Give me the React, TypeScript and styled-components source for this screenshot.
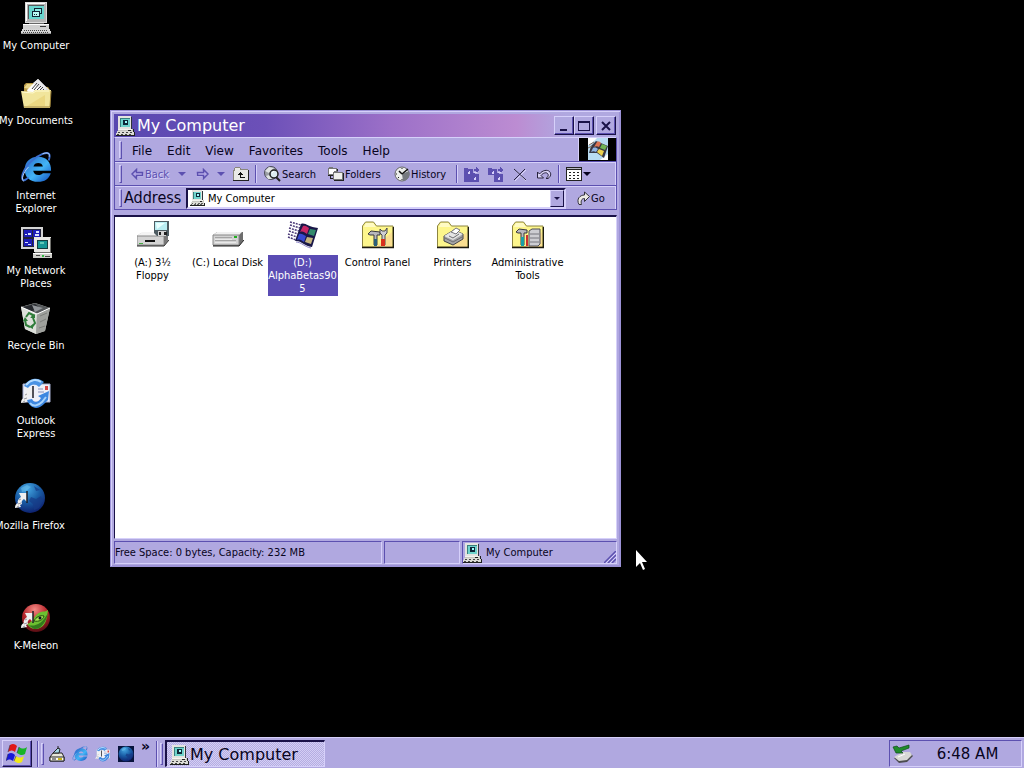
import React from "react";
import styled, { createGlobalStyle } from "styled-components";

const c = {
  face: "#b0a8e0",
  light: "#d6d0fa",
  mid: "#9c92d6",
  shadow: "#5c50b0",
  dark: "#1a1248",
  text: "#080420",
};
const ui = `"DejaVu Sans Condensed", "DejaVu Sans", sans-serif`;
const wide = `"DejaVu Sans", sans-serif`;

const GlobalStyle = createGlobalStyle`
  *, *::before, *::after { box-sizing: border-box; }
  body { margin: 0; background: #000; font: 11px/13px ${ui}; color: ${c.text}; }
  button, input { font: inherit; color: inherit; }
  button { border: 0; padding: 0; margin: 0; background: none; }
  svg { display: block; flex: none; }
`;

/* ---------- icons ---------- */

type IconProps = { size?: number };

const Svg = styled.svg<{ $w: number; $h?: number }>`
  width: ${(p) => p.$w}px;
  height: ${(p) => p.$h ?? p.$w}px;
`;

const Shortcut = () => (
  <g>
    <path d="M5 11h8v9l-3-3c-2 1-3 3-2 5l-2 1 1 2-6 1c0-3 1-4 3-5-1-1 0-4 3-6z" fill="#f0f0f0" />
    <path d="M13 9v12" stroke="#1c1c24" strokeWidth="1.500" />
    <path d="M4 22l3-1M5 18l2-1M3 25l2-1" stroke="#9a9aa0" />
  </g>
);

const ComputerLarge = () => (
  <Svg viewBox="0 0 32 32" $w={32} shapeRendering="crispEdges" aria-hidden>
    <path d="M5 0h22v21H5z" fill="#dcdcdc" />
    <path d="M6 1h20v19H6z" fill="#b4b4b4" />
    <path d="M6 1h19v1H7v17H6z" fill="#fff" />
    <path d="M8 3h16v14H8z" fill="#55585a" />
    <path d="M9 4h15v13H9z" fill="#69d6cf" />
    <path d="M14 6h8v6h-8z" fill="#123" />
    <path d="M15 7h6v4h-6z" fill="#8ceae4" />
    <path d="M12 9h8v6h-8z" fill="#123" />
    <path d="M13 10h6v4h-6z" fill="#bafaf4" />
    <path d="M14 12h1v1h-1zM16 12h1v1h-1z" fill="#123" />
    <path d="M9 21h15v2H9z" fill="#686868" />
    <path d="M3 22h26v5H3z" fill="#d0d0d0" />
    <path d="M3 22h26v1H3z" fill="#fff" />
    <path d="M20 24h6v1h-6z" fill="#333" />
    <path d="M2 27h28l1 4H1z" fill="#d6d6d6" />
    <path d="M4 28.500h24" stroke="#444" strokeDasharray="1 1" />
    <path d="M3 30.500h26" stroke="#444" strokeDasharray="1 1" />
    <path d="M1 31h30v1H1z" fill="#999" />
  </Svg>
);

const ComputerSmall = ({ size = 20 }: IconProps) => (
  <Svg viewBox="0 0 20 20" $w={size} shapeRendering="crispEdges" aria-hidden>
    <path d="M2 0h13v13H2z" fill="#e4e4e0" />
    <path d="M15 1h1v13H4v-1h11z" fill="#30343a" />
    <path d="M4 2h10v9H4z" fill="#39807f" />
    <path d="M5 3h9v8H5z" fill="#6fd3cc" />
    <path d="M7 4h5v5H7z" fill="#0e2838" />
    <path d="M9 5h2v2H9z" fill="#9ff" />
    <path d="M2 13h15v3H2z" fill="#c6c6c0" />
    <path d="M2 13h14v1H2z" fill="#f4f4f0" />
    <path d="M12 14h3v1h-3z" fill="#222" />
    <path d="M1 15h17v4H0v-2h1z" fill="#dcdcd6" />
    <path d="M2 16.500h15M1 18.500h16" stroke="#444" strokeDasharray="2 2" />
    <path d="M17 13h1v3h1v4H0v-1h18v-3h-1z" fill="#202020" />
  </Svg>
);

const Documents = () => (
  <Svg viewBox="0 0 32 32" $w={32} aria-hidden>
    <path d="M4 12V8l2-2h8l2 3 12 1 2 3v16H4z" fill="#b99a48" />
    <path d="M4 11l3-4h7l3 6z" fill="#ead78c" />
    <path d="M7 13L18 2l13 13-7 6H9z" fill="#fdfdfd" />
    <path d="M18 2l13 13-4 3L13 6z" fill="#e7e7ea" />
    <path d="M12 12l5-6M14 13l5-6M16 14l5-5M19 14l4-4M22 14l2-2" stroke="#3d3d44" />
    <path d="M26 11l5 5-3 3z" fill="#ccc" />
    <path d="M1 14l12 1 2-2h16l-1 18H4z" fill="#f1e59c" />
    <path d="M2 15l11 1 3-2h13" stroke="#fffbd0" fill="none" />
    <path d="M4 30h26l1-16" stroke="#9a7f34" fill="none" />
    <path d="M7 29l18-11v11z" fill="#e8cf72" opacity=".6" />
  </Svg>
);

const IE = ({ size = 34 }: IconProps) => (
  <Svg viewBox="0 0 34 34" $w={size} aria-hidden>
    <defs>
      <linearGradient id="ieg" x1="0" y1="0" x2="1" y2="1">
        <stop offset="0" stopColor="#2869c8" />
        <stop offset=".55" stopColor="#43b4f5" />
        <stop offset="1" stopColor="#114cbf" />
      </linearGradient>
    </defs>
    <path d="M33 20H14c.6 3 2.600 4.500 5.500 4.500 2.200 0 3.800-.8 4.800-2h8.400c-2 6-6.500 9.200-13.500 9.200C10.500 31.700 5 26.500 5 19 5 10 11 5 19.500 5 27.500 5 33.500 10.500 33 20zM14.300 15.500h10c-.5-2.500-2.500-3.700-4.900-3.700-2.600 0-4.500 1.200-5.100 3.700z" fill="url(#ieg)" />
    <path d="M9 27C3 33 1 29 3 23 6 14 16 5 24 2c7-2.500 9 0 6.500 7" stroke="#3b6fd0" strokeWidth="2" fill="none" />
    <path d="M4 31c-3-1-1-9 5-15M24 2c5-2 8-1 7 3" stroke="#bcd4f7" fill="none" />
  </Svg>
);

const Network = () => (
  <Svg viewBox="0 0 32 32" $w={32} shapeRendering="crispEdges" aria-hidden>
    <path d="M1 0h22v22H1z" fill="#d4d4d4" />
    <path d="M3 2h18v18H3z" fill="#22233a" />
    <path d="M4 3h8v7H4zM13 3h7v7h-7zM4 12h8v7H4zM13 12h7v7h-7z" fill="#1c1cb8" />
    <path d="M5 7h2v1H5zM8 6h3v2H8zM15 7h4v2h-4zM16 4h3v2h-3zM5 15h3v1H5zM8 17h3v1H8z" fill="#d7e0ff" />
    <path d="M14 10h17v15H14z" fill="#e8e8e4" />
    <path d="M30 11h1v15H15v-1h15z" fill="#70706c" />
    <path d="M17 13h11v9H17z" fill="#143c40" />
    <path d="M18 14h9v7h-9z" fill="#159595" />
    <path d="M20 15h4v2h-4z" fill="#60c8b8" />
    <path d="M13 26h19v5H13z" fill="#cfcfca" />
    <path d="M13 26h19v1H13z" fill="#fff" />
    <path d="M16 28h4v1h-4zM25 29h5v1h-5z" fill="#444" />
    <path d="M22 28h2v2h-2z" fill="#3b4" />
  </Svg>
);

const Recycle = () => (
  <Svg viewBox="0 0 32 32" $w={32} aria-hidden>
    <path d="M1 5L15 1l15 5-5 23-9 3L5 27z" fill="#c2c5c0" />
    <path d="M1 5L15 1l15 5-13 6z" fill="#55585a" />
    <path d="M3 5l12-3 5 4-8 3z" fill="#26282d" />
    <path d="M12 3l11 3-8 4z" fill="#92969a" />
    <path d="M1 5l16 7-1 20L5 27z" fill="#dde0da" />
    <path d="M17 12L30 6l-5 23-9 3z" fill="#9fa19d" />
    <path d="M1 5l16 7 13-6" stroke="#fff" fill="none" />
    <path d="M20 14l7-3M20 20l6-3M19 26l6-2" stroke="#7e807c" />
    <path d="M6 15l3-4 4 2-1 2M13 16l2 5-3 4M10 25l-4-2-1-5" stroke="#2f7d3a" strokeWidth="2" fill="none" />
    <path d="M10 16h5v-4zM13 22v5l-4-2zM3 19l2-4 3 4z" fill="#2f7d3a" />
  </Svg>
);

const Outlook = ({ size = 32 }: IconProps) => (
  <Svg viewBox="0 0 32 32" $w={size} aria-hidden>
    <path d="M3 7h27v18H3z" fill="#eef0f8" stroke="#a6aed0" />
    <path d="M25 9h3v4h-3z" fill="#d84848" />
    <path d="M18 12h5M18 15h6" stroke="#8890b8" />
    <path d="M4 9c5-9 15-9 20-4l-5 5c-4-4-8-3-11 1z" fill="#4a93e4" />
    <path d="M6 8c5-6 11-6 15-3" stroke="#b4dcff" strokeWidth="2" fill="none" />
    <path d="M7 23c3 8 10 11 17 4l4-4 1-9-11 5 3 2c-3 5-7 5-9 1z" fill="#3d87e0" />
    <path d="M10 26c3 4 8 3 12-1l4-5" stroke="#a6d2fb" strokeWidth="2" fill="none" />
    <Shortcut />
  </Svg>
);

const Globe = ({ size = 32, flat }: IconProps & { flat?: boolean }) => (
  <Svg viewBox="0 0 32 32" $w={size} aria-hidden>
    <defs>
      <radialGradient id="globe" cx=".4" cy=".2" r=".85">
        <stop offset="0" stopColor="#46a8e4" />
        <stop offset=".5" stopColor="#1a5ea6" />
        <stop offset="1" stopColor="#0c1a68" />
      </radialGradient>
    </defs>
    {flat && <path d="M0 0h32v32H0z" fill="#08143c" />}
    <circle cx="16" cy="16" r="15" fill="url(#globe)" />
    <path d="M17 15l5 2 5-3 2 5-4 7-5 2-1-6-4-3zM20 4l6 4-4 1z" fill="#173a86" opacity=".7" />
    <path d="M7 6l6-3 4 2-5 4-4 1z" fill="#74c4ee" opacity=".5" />
    {!flat && <Shortcut />}
  </Svg>
);

const KMeleon = () => (
  <Svg viewBox="0 0 32 32" $w={32} aria-hidden>
    <defs>
      <radialGradient id="km" cx=".45" cy=".2" r=".85">
        <stop offset="0" stopColor="#f28a84" />
        <stop offset=".5" stopColor="#b8262c" />
        <stop offset="1" stopColor="#4a0a10" />
      </radialGradient>
    </defs>
    <circle cx="16" cy="16" r="14" fill="url(#km)" />
    <path d="M7 22c6-1 7-10 14-12 3-1 4 0 7-2-1 8-2 18-12 19-4 0-7-2-9-5z" fill="#6cc030" />
    <path d="M8 23c7 2 14-1 20-12-2 10-8 17-14 16z" fill="#347a1c" />
    <path d="M14 19c2-4 6-6 10-5-1 4-5 6-10 5z" fill="#a5e455" stroke="#24500f" />
    <circle cx="20" cy="16" r="1.500" fill="#112" />
    <Shortcut />
  </Svg>
);

const Floppy = () => (
  <Svg viewBox="0 0 32 32" $w={32} aria-hidden>
    <path d="M0 15l4-3h27v8l-4 5H0z" fill="#8f8f8f" />
    <path d="M1 14l4-3h26l-4 4H1z" fill="#f4f4f4" />
    <path d="M0 15h27v9H0z" fill="#d4d4d4" stroke="#888" />
    <path d="M27 15l4-4v8l-4 5z" fill="#777" />
    <path d="M0 25h27l5-6" stroke="#333" fill="none" />
    <path d="M8 19h10v2H8z" fill="#111" />
    <path d="M2 22h4v1H2z" fill="#4a4" />
    <path d="M17 0h15v15H20l-3-3z" fill="#4e5c62" />
    <path d="M18 1h12v8H18z" fill="#b9edf2" />
    <path d="M19 2h9l-8 6z" fill="#e8ffff" />
    <path d="M21 10h8v5h-8z" fill="#d4d4d4" />
    <path d="M22 11h2v3h-2zM27 11h3v3h-3z" fill="#222" />
  </Svg>
);

const Disk = () => (
  <Svg viewBox="0 0 32 32" $w={32} aria-hidden>
    <path d="M1 14l4-3h26v9l-4 5H1z" fill="#6d6d6d" />
    <path d="M1 14l4-3h25l-3 3z" fill="#f0f0f0" />
    <path d="M1 14h26v10H1z" fill="#d2d2d2" stroke="#888" />
    <path d="M3 17h17M3 20h21" stroke="#777" />
    <path d="M3 18h17M3 21h21" stroke="#fff" />
    <path d="M1 25h26l5-6" stroke="#222" fill="none" />
    <path d="M22 15h3v2h-3z" fill="#22b020" />
  </Svg>
);

const WinFlag = () => (
  <Svg viewBox="0 0 32 32" $w={32} aria-hidden>
    <path d="M14 3c4-2 7 3 17 4l-6 19c-8-1-11-7-17-6z" fill="#191748" />
    <path d="M16 5c3-1 4 1 6 2l-2 6c-3-2-4-3-7-2z" fill="#c72766" />
    <path d="M23 8l6 1-2 6-6-2z" fill="#328a6c" />
    <path d="M12 13c3-1 4 1 7 2l-2 6c-3-2-4-3-7-2z" fill="#3849d2" />
    <path d="M20 16l6 1-2 6-6-2z" fill="#c4b480" />
    <path d="M3 1l11 3M3 4l10 3M2 7l10 3M2 10l9 3M1 13l9 3M1 16l8 3" stroke="#4b3a78" strokeWidth="1.500" strokeDasharray="2 1" />
    <path d="M9 21c5 0 9 5 15 6" stroke="#8d85c8" fill="none" />
  </Svg>
);

const FolderShape = () => (
  <>
    <path d="M0.500 26V5l3-4h8l3 4H31v21z" fill="#fdf68c" stroke="#8c8440" />
    <path d="M2 6l2-4h7l3 4z" fill="#fffbc4" />
    <path d="M14 26L30 11v15z" fill="#f8cf94" opacity=".6" />
    <path d="M0 26.500h31.500V6" stroke="#1c1a10" strokeWidth="1.500" fill="none" />
  </>
);

const ControlPanel = () => (
  <Svg viewBox="0 0 32 32" $w={32} aria-hidden>
    <FolderShape />
    <path d="M6 13l3-3 9 1v3h-3v10h-3V14H8z" fill="#b8b8bc" stroke="#38383e" />
    <path d="M12 18h3v7h-3z" fill="#2a6078" />
    <path d="M18 8v4l2 2v10h3V14l2-2V7l-2 3h-3z" fill="#cfd0d3" stroke="#484850" />
    <path d="M19 18h4v7h-4z" fill="#d8301c" />
  </Svg>
);

const Printers = () => (
  <Svg viewBox="0 0 32 32" $w={32} aria-hidden>
    <FolderShape />
    <path d="M7 15l10-6 9 4v5l-10 6-9-4z" fill="#a5a5a8" stroke="#47474a" />
    <path d="M7 15l10-6 9 4-10 6z" fill="#e4e4e4" />
    <path d="M14 11l5-4 4 2-4 4z" fill="#fff" stroke="#77777c" />
    <path d="M8 17l8 4 9-5M12 15l4 2 6-4" stroke="#6d6d70" fill="none" />
  </Svg>
);

const AdminTools = () => (
  <Svg viewBox="0 0 32 32" $w={32} aria-hidden>
    <FolderShape />
    <path d="M17 10l3-2h8v15l-2 2h-9z" fill="#cdcdd2" stroke="#4f4f58" />
    <path d="M18 13h9M18 17h9M18 21h9" stroke="#77777f" />
    <path d="M4 11l3-3 8 1v3h-3v12H9V12H6z" fill="#b9b9bd" stroke="#38383e" />
    <path d="M9 16h3v9H9z" fill="#18a0a8" />
    <path d="M14 14h2v11h-2z" fill="#cf3030" />
  </Svg>
);

const Arrow = ({ flip }: { flip?: boolean }) => (
  <Svg viewBox="0 0 13 12" $w={13} $h={12} aria-hidden>
    <g transform={flip ? "matrix(-1 0 0 1 13 0)" : undefined}>
      <path d="M2 7L6 3v2.500h6v3H6V11z" fill="none" stroke={c.light} />
      <path d="M1 6L5.500 1.500v3h6v3h-6v3z" fill="#b4aae6" stroke={c.shadow} strokeWidth="1.500" />
    </g>
  </Svg>
);

const Caret = ({ color = c.text }: { color?: string }) => (
  <Svg viewBox="0 0 8 4" $w={8} $h={4} aria-hidden>
    <path d="M0 0h8L4 4z" fill={color} />
  </Svg>
);

const UpFolder = () => (
  <Svg viewBox="0 0 16 14" $w={16} $h={14} shapeRendering="crispEdges" aria-hidden>
    <path d="M0 3h1V1h1V0h5v1h1v1h7v11H0z" fill="#8a867c" />
    <path d="M1 4h1V1h5v2h8v10H1z" fill="#e9e9e6" />
    <path d="M15 3h1v11H0v-1h15z" fill="#222" />
    <path d="M5 7h1V6h1V5h1v1h1v1h1v1H8v2h4v1H7V8H5z" fill="#111" />
  </Svg>
);

const SearchIcon = () => (
  <Svg viewBox="0 0 17 16" $w={17} $h={16} aria-hidden>
    <circle cx="7" cy="7" r="6.500" fill="#9ca0a6" stroke="#4c4c5a" />
    <path d="M1 5l4-4 5 1-5 5zM2 10l3-1 3 4-4 0z" fill="#e0e4e4" />
    <circle cx="10" cy="8" r="4" fill="#dcecf0" stroke="#222" strokeWidth="1.500" />
    <path d="M12 11l4 4" stroke="#222" strokeWidth="2" />
    <path d="M8 7l2-2" stroke="#fff" />
  </Svg>
);

const FoldersIcon = () => (
  <Svg viewBox="0 0 16 14" $w={16} $h={14} shapeRendering="crispEdges" aria-hidden>
    <path d="M0 1h1V0h4v1h4v7H0z" fill="#777" />
    <path d="M1 2h7v5H1z" fill="#fff" />
    <path d="M9 2h1v3H9zM0 8h5v1H0z" fill="#222" />
    <path d="M5 5h1V4h4v1h5v8H5z" fill="#777" />
    <path d="M6 6h8v6H6z" fill="#f0f0ec" />
    <path d="M15 6h1v8H6v-1h9zM2 9h1v2h2v1H2z" fill="#222" />
  </Svg>
);

const HistoryIcon = () => (
  <Svg viewBox="0 0 16 16" $w={16} aria-hidden>
    <circle cx="8" cy="8" r="7" fill="#eceeec" stroke="#666" />
    <path d="M8 8l7-3a7 7 0 01-6 10z" fill="#767a80" />
    <path d="M8 8l6-5M8 8L5 5" stroke="#111" strokeWidth="1.500" />
    <path d="M8 2v1M2 8h1M8 13v1M4 12l1-1" stroke="#222" />
  </Svg>
);

const TransferIcon = ({ copy }: { copy?: boolean }) => (
  <Svg viewBox="0 0 16 15" $w={16} $h={15} shapeRendering="crispEdges" aria-hidden>
    <path d="M0 1h3l1 1h5v6H0zM6 6h4l1 1h4v8H6z" fill={c.shadow} />
    {!copy && <path d="M0 8h6v7H0z" fill={c.shadow} />}
    <path d="M10 2h2V0l4 3-4 3V4h-2z" fill={c.shadow} />
    <path d="M15.500 8v7M7 14.500h9M3 6h1V5h1V4h1v3H4V6zM9 12h1v-1h1v-1h1v3h-2v-1z" fill={c.light} stroke="none" />
    <path d="M10 5.500h3" stroke={c.light} />
  </Svg>
);

const DeleteIcon = () => (
  <Svg viewBox="0 0 14 13" $w={14} $h={13} aria-hidden>
    <path d="M2 2l11 11M13 2L2 13" stroke="#dcd6fa" />
    <path d="M1 1l12 11M12 1L1 12" stroke="#28233e" />
  </Svg>
);

const UndoIcon = () => (
  <Svg viewBox="0 0 16 12" $w={16} $h={12} aria-hidden>
    <path d="M1.500 4v6h6L5 7.500C7 5 10 4 11.500 5.500S12 9 10 10.500h2c3-2 3.500-5 1.500-7S6.500 2 3.500 6z" fill="#d8d2f6" stroke="#28233e" />
  </Svg>
);

const ViewsIcon = () => (
  <Svg viewBox="0 0 16 14" $w={16} $h={14} shapeRendering="crispEdges" aria-hidden>
    <path d="M0 0h16v14H0z" fill="#222" />
    <path d="M1 3h14v10H1z" fill="#fff" />
    <path d="M1 1h14v1H1z" fill="#b9b9c4" />
    <path d="M3 5.500h10M3 8.500h10M3 11.500h10" stroke="#222" strokeDasharray="2 2" />
  </Svg>
);

const GoIcon = () => (
  <Svg viewBox="0 0 14 15" $w={14} $h={15} aria-hidden>
    <path d="M2 13.500C-1 8 3 4 7.500 4V1l5 4.500-5 5V7.500C4.500 7.500 3.500 10 4.500 13.500z" fill="#eceae4" stroke="#33303a" />
  </Svg>
);

const Throbber = () => (
  <Svg viewBox="0 0 20 22" $w={20} $h={22} aria-hidden>
    <path d="M0 0h20v22H0z" fill="#b9dcf2" />
    <path d="M0 0h9L2 7H0zM12 22h8v-6z" fill="#fff" />
    <path d="M3 8l5-5 12 5-4 12-7-5-8 0z" fill="#393844" />
    <path d="M9 4c2-1 3 0 4 1l-2 4c-2-1-3-1-5 0z" fill="#dc7352" />
    <path d="M14 6l5 2-2 4-5-2z" fill="#71b653" />
    <path d="M5 10c2-1 4 0 5 1l-2 3c-2-1-3-1-5 0z" fill="#8fb4e4" />
    <path d="M11 11l5 2-2 5-5-4z" fill="#ecd24f" />
    <path d="M1 7l5-3M0 10l4-2" stroke="#806c5c" />
  </Svg>
);

const StartFlag = () => (
  <Svg viewBox="0 0 22 22" $w={22} aria-hidden>
    <path d="M4 2c3-2 5-1 7 1L9 9C7 7 5 7 2 9z" fill="#e01818" />
    <path d="M13 4c3 2 5 2 8 0l-2 7c-3 2-5 1-8-1z" fill="#18b428" />
    <path d="M2 11c3-2 5-1 7 1l-2 6c-3-2-4-2-7 0z" fill="#1818d8" />
    <path d="M10 13c3 2 5 2 8 0l-2 6c-3 2-5 1-8-1z" fill="#f0e818" />
    <path d="M4 2L2 9M13 4l-2 6M2 11l-2 7M10 13l-2 5" stroke="#303048" strokeWidth=".6" />
  </Svg>
);

const ShowDesktop = () => (
  <Svg viewBox="0 0 16 16" $w={16} aria-hidden>
    <path d="M1 11l3-4h9l2 4v4H1z" fill="#e8e8da" stroke="#222" />
    <path d="M1 11h14v4H1z" fill="#fafaf0" stroke="#222" />
    <path d="M4 7l5-5 2 1-1 4z" fill="#a5d6e4" stroke="#222" />
    <path d="M9 0v3" stroke="#222" />
    <path d="M3 13h4" stroke="#222" />
    <path d="M9 12h4v2H9z" fill="#c8b418" />
  </Svg>
);

const Eject = () => (
  <Svg viewBox="0 0 22 20" $w={22} $h={20} aria-hidden>
    <path d="M2 14l9-5h7l3 3-6 6-8 1z" fill="#4c4c50" />
    <path d="M2 13l9-5h7l2 3-5 5-8 1z" fill="#d8d8d6" />
    <path d="M6 13l7-3" stroke="#fff" />
    <path d="M1 3l3 6h7l-2-2 8-3V1L7 4 5 2z" fill="#208c2c" stroke="#0d4c18" strokeWidth=".7" />
  </Svg>
);

const Cursor = styled.svg`
  position: absolute;
  left: 635px;
  top: 550px;
  width: 12px;
  height: 21px;
`;

/* ---------- desktop ---------- */

const Screen = styled.div`
  display: grid;
  grid-template-rows: 1fr auto;
  min-height: 100vh;
  overflow: hidden;
`;

const Desktop = styled.main`
  position: relative;
  overflow: hidden;
`;

const ShortcutButton = styled.button<{ $x: number; $y: number }>`
  position: absolute;
  left: ${(p) => p.$x}px;
  top: ${(p) => p.$y}px;
  display: flex;
  flex-direction: column;
  align-items: center;
  gap: 5px;
  width: 76px;
  padding-top: 2px;
  color: #fff;
`;

const ShortcutLabel = styled.span`
  white-space: pre;
  text-align: center;
`;

const shortcuts = [
  { label: "My Computer", x: -2, y: 0, icon: <ComputerLarge /> },
  { label: "My Documents", x: -2, y: 75, icon: <Documents /> },
  { label: "Internet\nExplorer", x: -2, y: 150, icon: <IE size={32} /> },
  { label: "My Network\nPlaces", x: -2, y: 225, icon: <Network /> },
  { label: "Recycle Bin", x: -2, y: 300, icon: <Recycle /> },
  { label: "Outlook\nExpress", x: -2, y: 375, icon: <Outlook /> },
  { label: "Mozilla Firefox", x: -8, y: 480, icon: <Globe /> },
  { label: "K-Meleon", x: -2, y: 600, icon: <KMeleon /> },
];

/* ---------- window ---------- */

const Window = styled.section`
  position: absolute;
  left: 110px;
  top: 110px;
  width: 511px;
  height: 457px;
  display: flex;
  flex-direction: column;
  padding: 3px 3px 2px;
  background: ${c.face};
  border: 1px solid ${c.mid};
  box-shadow: inset 1px 1px ${c.light}, inset -1px -1px ${c.mid};
`;

const TitleBar = styled.header`
  display: flex;
  align-items: center;
  height: 23px;
  padding: 0 1px 0 2px;
  background: linear-gradient(90deg, #5848b0 0, #6c50b8 30%, #9c70c8 55%, #bc8cd2 80%, #b0a8e0 90%);
`;

const Title = styled.h1`
  flex: 1;
  margin: 0 0 0 1px;
  font: 16px/20px ${wide};
  color: #fff;
`;

const CaptionButton = styled.button<{ $gap?: boolean }>`
  display: grid;
  place-items: center;
  width: 20px;
  height: 19px;
  margin-left: ${(p) => (p.$gap ? 2 : 0)}px;
  background: ${c.face};
  border: 1px solid;
  border-color: ${c.light} ${c.dark} ${c.dark} ${c.light};
  box-shadow: inset -1px -1px ${c.shadow};
`;

const Bands = styled.div`
  border: 1px solid ${c.shadow};
  border-top-color: ${c.light};
  border-bottom: 0;
  box-shadow: inset -1px 0 ${c.light};
  margin-bottom: 5px;
`;

const Band = styled.div`
  display: flex;
  align-items: center;
  height: 24px;
  padding-left: 4px;
  border-top: 1px solid ${c.light};
  border-bottom: 1px solid ${c.shadow};
  &:first-child { border-top: 0; }
`;

const Gripper = styled.span`
  width: 3px;
  height: 18px;
  flex: none;
  border: 1px solid;
  border-color: ${c.light} ${c.shadow} ${c.shadow} ${c.light};
`;

const MenuButton = styled.button`
  margin-left: 15px;
  padding-top: 2px;
  font: 12px/20px ${wide};
  &:first-of-type { margin-left: 10px; }
`;

const MenuList = styled.div`
  display: flex;
  flex: 1;
`;

const ThrobberBox = styled.div`
  display: flex;
  justify-content: center;
  width: 38px;
  height: 23px;
  background: #000;
  border-left: 1px solid ${c.light};
`;

const ToolButton = styled.button<{ $w: number; $gap?: number; $off?: boolean }>`
  display: flex;
  align-items: center;
  gap: 1px;
  width: ${(p) => p.$w}px;
  margin-left: ${(p) => p.$gap ?? 0}px;
  flex: none;
  white-space: nowrap;
  color: ${(p) => (p.$off ? c.shadow : c.text)};
  text-shadow: ${(p) => (p.$off ? `1px 1px ${c.light}` : "none")};
`;

const ToolSeparator = styled.span`
  width: 2px;
  height: 18px;
  margin: 0 6px;
  flex: none;
  background: ${c.shadow};
  border-right: 1px solid ${c.light};
`;

const AddressLabel = styled.label`
  margin-left: 2px;
  width: 62px;
  flex: none;
  font: 16px/20px ${ui};
`;

const ComboBox = styled.div`
  display: flex;
  align-items: center;
  flex: 1;
  min-width: 0;
  height: 21px;
  padding-left: 2px;
  background: #fff;
  border: 2px solid;
  border-color: ${c.dark} ${c.light} ${c.light} ${c.dark};
`;

const AddressInput = styled.input`
  flex: 1;
  min-width: 0;
  height: 17px;
  padding: 1px 0 0 2px;
  border: 0;
  outline: 0;
  background: none;
  color: #000;
`;

const DropButton = styled.button`
  display: grid;
  place-items: center;
  width: 14px;
  height: 17px;
  background: ${c.face};
  border: 1px solid;
  border-color: ${c.light} ${c.dark} ${c.dark} ${c.light};
`;

const GoButton = styled.button`
  display: flex;
  align-items: center;
  width: 50px;
  padding-left: 11px;
`;

const FileArea = styled.div`
  flex: 1;
  min-height: 0;
  display: flex;
  flex-wrap: wrap;
  align-content: flex-start;
  padding-top: 4px;
  background: #fff;
  border: solid;
  border-width: 2px 1px 1px 1px;
  border-color: ${c.dark} ${c.light} ${c.light} ${c.dark};
`;

const FileItem = styled.button`
  display: flex;
  flex-direction: column;
  align-items: center;
  width: 75px;
  color: #000;
`;

const FileLabel = styled.span<{ $selected?: boolean }>`
  width: 70px;
  margin-top: 2px;
  padding: 1px 0;
  white-space: pre;
  display: flex;
  flex-direction: column;
  align-items: center;
  background: ${(p) => (p.$selected ? "#5a4cb4" : "transparent")};
  color: ${(p) => (p.$selected ? "#fff" : "#000")};
`;

const files = [
  { label: "(A:) 3½\nFloppy", icon: <Floppy /> },
  { label: "(C:) Local Disk", icon: <Disk /> },
  { label: "(D:)\nAlphaBetas90\n5", icon: <WinFlag />, selected: true },
  { label: "Control Panel", icon: <ControlPanel /> },
  { label: "Printers", icon: <Printers /> },
  { label: "Administrative\nTools", icon: <AdminTools /> },
];

const StatusBar = styled.footer`
  display: grid;
  grid-template-columns: 268px 76px 1fr;
  gap: 2px;
  height: 23px;
  margin-top: 2px;
`;

const StatusPane = styled.div`
  display: flex;
  align-items: center;
  gap: 3px;
  border: 1px solid;
  border-color: ${c.shadow} ${c.light} ${c.light} ${c.shadow};
`;

const Grip = styled.svg`
  width: 12px;
  height: 12px;
  margin-left: auto;
  align-self: flex-end;
`;

/* ---------- taskbar ---------- */

const TaskBar = styled.footer`
  display: flex;
  align-items: center;
  height: 31px;
  padding: 1px 2px 0;
  background: ${c.face};
  border-top: 1px solid ${c.light};
`;

const StartButton = styled.button`
  display: grid;
  place-items: center;
  width: 30px;
  height: 27px;
  margin-right: 5px;
  border: 1px solid;
  border-color: ${c.light} ${c.dark} ${c.dark} ${c.light};
  box-shadow: inset -1px -1px ${c.shadow};
`;

const TaskDivider = styled.span`
  width: 2px;
  height: 26px;
  margin-right: 2px;
  background: ${c.shadow};
  border-right: 1px solid ${c.light};
`;

const TaskGripper = styled(Gripper)`
  height: 22px;
`;

const QuickLaunch = styled.nav`
  display: flex;
  align-items: center;
  align-self: stretch;
  gap: 7px;
  width: 112px;
  padding-left: 5px;
`;

const More = styled.button`
  align-self: flex-start;
  font: bold 14px/14px ${wide};
`;

const TaskButton = styled.button`
  display: flex;
  align-items: center;
  width: 160px;
  height: 27px;
  margin-left: 2px;
  padding: 2px 0 0 3px;
  font: 16px/22px ${wide};
  background: repeating-conic-gradient(#d4cef4 0 25%, #b4ade2 0 50%) 0 0 / 2px 2px;
  border: 2px solid;
  border-width: 2px 1px 1px 2px;
  border-color: ${c.dark} ${c.light} ${c.light} ${c.dark};
`;

const Tray = styled.div`
  display: flex;
  align-items: center;
  width: 133px;
  height: 27px;
  margin-left: auto;
  padding-left: 2px;
  border: 1px solid;
  border-color: ${c.shadow} ${c.light} ${c.light} ${c.shadow};
`;

const Clock = styled.time`
  flex: 1;
  padding-top: 1px;
  text-align: center;
  font: 15px/20px ${wide};
`;

const ExplorerWindow = () => (
  <Window aria-label="My Computer">
    <TitleBar>
      <ComputerSmall />
      <Title>My Computer</Title>
      <CaptionButton aria-label="Minimize">
        <Svg viewBox="0 0 12 12" $w={12} shapeRendering="crispEdges"><path d="M2 9h7v2H2z" fill={c.dark} /></Svg>
      </CaptionButton>
      <CaptionButton aria-label="Maximize">
        <Svg viewBox="0 0 12 12" $w={12} shapeRendering="crispEdges"><path d="M0 1h12v10H0zM1 3v7h10V3z" fillRule="evenodd" fill={c.dark} /></Svg>
      </CaptionButton>
      <CaptionButton $gap aria-label="Close">
        <Svg viewBox="0 0 12 12" $w={12}><path d="M2 2l8 8M10 2l-8 8" stroke={c.dark} strokeWidth="2" /></Svg>
      </CaptionButton>
    </TitleBar>

    <Bands>
      <Band>
        <Gripper />
        <MenuList>
          {["File", "Edit", "View", "Favorites", "Tools", "Help"].map((m) => (
            <MenuButton key={m}>{m}</MenuButton>
          ))}
        </MenuList>
        <ThrobberBox><Throbber /></ThrobberBox>
      </Band>
      <Band>
        <Gripper />
        <ToolButton $w={47} $gap={9} $off><Arrow />Back</ToolButton>
        <ToolButton $w={8} $off aria-label="Back history"><Caret color={c.shadow} /></ToolButton>
        <ToolButton $w={13} $gap={10} $off aria-label="Forward"><Arrow flip /></ToolButton>
        <ToolButton $w={8} $gap={8} $off aria-label="Forward history"><Caret color={c.shadow} /></ToolButton>
        <ToolButton $w={16} $gap={8} aria-label="Up"><UpFolder /></ToolButton>
        <ToolSeparator />
        <ToolButton $w={56} $gap={1}><SearchIcon />Search</ToolButton>
        <ToolButton $w={60} $gap={8}><FoldersIcon />Folders</ToolButton>
        <ToolButton $w={56} $gap={6}><HistoryIcon />History</ToolButton>
        <ToolSeparator />
        <ToolButton $w={16} aria-label="Move To"><TransferIcon /></ToolButton>
        <ToolButton $w={16} $gap={8} aria-label="Copy To"><TransferIcon copy /></ToolButton>
        <ToolButton $w={14} $gap={9} aria-label="Delete"><DeleteIcon /></ToolButton>
        <ToolButton $w={16} $gap={9} aria-label="Undo"><UndoIcon /></ToolButton>
        <ToolSeparator />
        <ToolButton $w={26} aria-label="Views"><ViewsIcon /><Caret /></ToolButton>
      </Band>
      <Band>
        <Gripper />
        <AddressLabel htmlFor="address">Address</AddressLabel>
        <ComboBox>
          <ComputerSmall size={16} />
          <AddressInput id="address" defaultValue="My Computer" />
          <DropButton aria-label="Show addresses">
            <Svg viewBox="0 0 6 3" $w={6} $h={3}><path d="M0 0h6L3 3z" fill={c.dark} /></Svg>
          </DropButton>
        </ComboBox>
        <GoButton><GoIcon />Go</GoButton>
      </Band>
    </Bands>

    <FileArea>
      {files.map((f) => (
        <FileItem key={f.label}>
          {f.icon}
          <FileLabel $selected={f.selected}>{f.label}</FileLabel>
        </FileItem>
      ))}
    </FileArea>

    <StatusBar>
      <StatusPane>Free Space: 0 bytes, Capacity: 232 MB</StatusPane>
      <StatusPane />
      <StatusPane>
        <ComputerSmall />
        My Computer
        <Grip viewBox="0 0 12 12" aria-hidden>
          <path d="M0 12L12 0M4 12l8-8M8 12l4-4" stroke={c.shadow} strokeWidth="1.500" />
          <path d="M2 12L12 2M6 12l6-6" stroke={c.light} />
        </Grip>
      </StatusPane>
    </StatusBar>
  </Window>
);

export default function App() {
  return (
    <Screen>
      <GlobalStyle />
      <Desktop>
        <nav aria-label="Desktop">
          {shortcuts.map((s) => (
            <ShortcutButton key={s.label} $x={s.x} $y={s.y}>
              {s.icon}
              <ShortcutLabel>{s.label}</ShortcutLabel>
            </ShortcutButton>
          ))}
        </nav>
        <ExplorerWindow />
        <Cursor viewBox="0 0 12 21" aria-hidden>
          <path d="M1 0v17l4-4 3 7 2-1-3-7h5z" fill="#fff" />
        </Cursor>
      </Desktop>
      <TaskBar>
        <StartButton aria-label="Start"><StartFlag /></StartButton>
        <TaskDivider />
        <TaskGripper />
        <QuickLaunch>
          <button aria-label="Show Desktop"><ShowDesktop /></button>
          <button aria-label="Internet Explorer"><IE size={16} /></button>
          <button aria-label="Outlook Express"><Outlook size={16} /></button>
          <button aria-label="Mozilla Firefox"><Globe size={16} flat /></button>
          <More aria-label="More">»</More>
        </QuickLaunch>
        <TaskDivider />
        <TaskGripper />
        <TaskButton><ComputerSmall />My Computer</TaskButton>
        <Tray>
          <Eject />
          <Clock>6:48 AM</Clock>
        </Tray>
      </TaskBar>
    </Screen>
  );
}
